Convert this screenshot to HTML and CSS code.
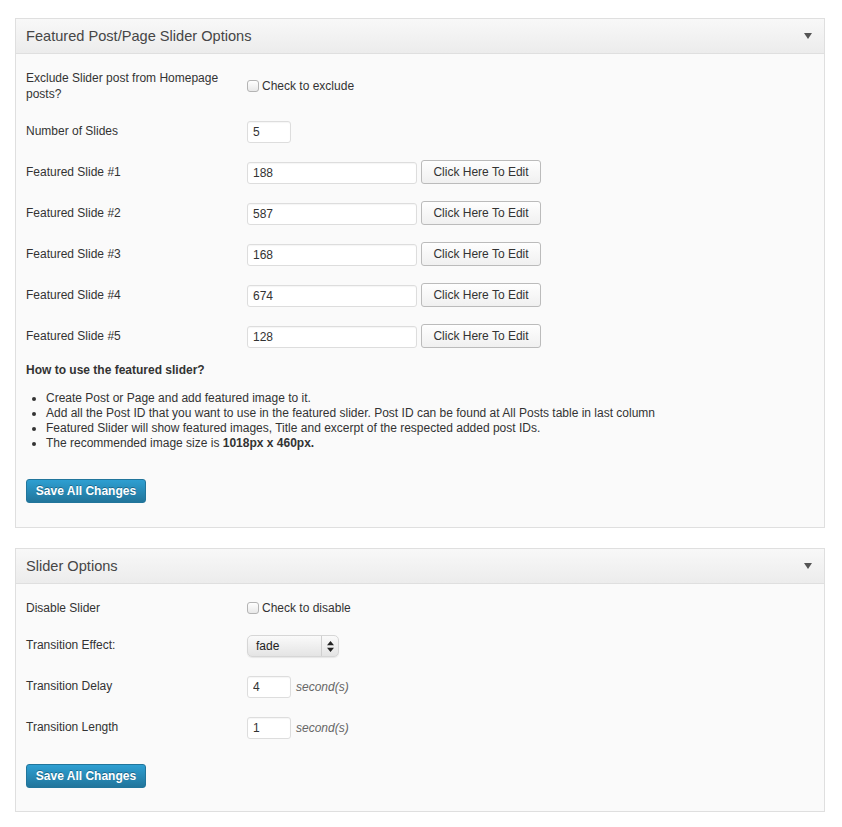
FILE: index.html
```html
<!DOCTYPE html>
<html>
<head>
<meta charset="utf-8">
<title>Slider Options</title>
<link rel="stylesheet" href="styles.css">
</head>
<body>
<div class="page">
  <section class="panel">
    <header class="panel-head">
      <h2 class="panel-title">Featured Post/Page Slider Options</h2>
      <svg class="toggle" width="8" height="6" viewBox="0 0 8 6"><path d="M0 0H8L4 6Z" fill="#555"/></svg>
    </header>
    <div class="panel-body">
      <div class="row row-center">
        <div class="label">Exclude Slider post from Homepage posts?</div>
        <label class="check"><input type="checkbox" class="cb"><span>Check to exclude</span></label>
      </div>
      <div class="row">
        <div class="label">Number of Slides</div>
        <div class="ctrl"><input type="text" class="inp small" value="5"></div>
      </div>
      <div class="row">
        <div class="label">Featured Slide #1</div>
        <div class="ctrl"><input type="text" class="inp wide" value="188"><button class="btn">Click Here To Edit</button></div>
      </div>
      <div class="row">
        <div class="label">Featured Slide #2</div>
        <div class="ctrl"><input type="text" class="inp wide" value="587"><button class="btn">Click Here To Edit</button></div>
      </div>
      <div class="row">
        <div class="label">Featured Slide #3</div>
        <div class="ctrl"><input type="text" class="inp wide" value="168"><button class="btn">Click Here To Edit</button></div>
      </div>
      <div class="row">
        <div class="label">Featured Slide #4</div>
        <div class="ctrl"><input type="text" class="inp wide" value="674"><button class="btn">Click Here To Edit</button></div>
      </div>
      <div class="row last">
        <div class="label">Featured Slide #5</div>
        <div class="ctrl"><input type="text" class="inp wide" value="128"><button class="btn">Click Here To Edit</button></div>
      </div>
      <h3 class="howto">How to use the featured slider?</h3>
      <ul class="steps">
        <li>Create Post or Page and add featured image to it.</li>
        <li>Add all the Post ID that you want to use in the featured slider. Post ID can be found at All Posts table in last column</li>
        <li>Featured Slider will show featured images, Title and excerpt of the respected added post IDs.</li>
        <li>The recommended image size is <strong>1018px x 460px.</strong></li>
      </ul>
      <button class="save save-1">Save All Changes</button>
    </div>
  </section>

  <section class="panel">
    <header class="panel-head">
      <h2 class="panel-title">Slider Options</h2>
      <svg class="toggle" width="8" height="6" viewBox="0 0 8 6"><path d="M0 0H8L4 6Z" fill="#555"/></svg>
    </header>
    <div class="panel-body body-2">
      <div class="row row-center first-2">
        <div class="label">Disable Slider</div>
        <label class="check"><input type="checkbox" class="cb"><span>Check to disable</span></label>
      </div>
      <div class="row">
        <div class="label">Transition Effect:</div>
        <div class="ctrl">
          <div class="select">
            <span class="select-val">fade</span>
            <span class="select-arrows"><svg width="7" height="11" viewBox="0 0 7 11"><path d="M3.5 0L7 4.2H0Z M3.5 11L7 6.8H0Z" fill="#222"/></svg></span>
          </div>
        </div>
      </div>
      <div class="row">
        <div class="label">Transition Delay</div>
        <div class="ctrl"><input type="text" class="inp small" value="4"><em class="unit">second(s)</em></div>
      </div>
      <div class="row">
        <div class="label">Transition Length</div>
        <div class="ctrl"><input type="text" class="inp small" value="1"><em class="unit">second(s)</em></div>
      </div>
      <button class="save save-2">Save All Changes</button>
    </div>
  </section>
</div>
</body>
</html>
```

FILE: styles.css
```css
html, body {
  margin: 0;
  padding: 0;
  background: #ffffff;
}
body {
  font-family: "Liberation Sans", Arial, Helvetica, sans-serif;
  font-size: 12px;
  color: #333333;
}
.page {
  padding: 18px 17px 0 15px;
  display: flex;
  flex-direction: column;
  gap: 20px;
}
.panel {
  border: 1px solid #dfdfdf;
  background: #fafafa;
}
.panel-head {
  height: 35px;
  box-sizing: border-box;
  display: flex;
  align-items: center;
  justify-content: space-between;
  padding: 0 12px 0 10px;
  background: linear-gradient(to bottom, #f8f8f8, #ececec);
  border-bottom: 1px solid #dfdfdf;
}
.panel-title {
  margin: 0;
  font-size: 14.6px;
  font-weight: normal;
  color: #464646;
  line-height: 20px;
}
.toggle {
  display: block;
}
.panel-body {
  padding: 15px 10px 24px 10px;
}
.body-2 {
  padding-top: 15px;
  padding-bottom: 23px;
}
.row {
  display: flex;
  align-items: flex-start;
  margin-bottom: 19px;
}
.row.last {
  margin-bottom: 14px;
}
.row-center {
  align-items: center;
}
.label {
  width: 200px;
  flex: none;
  margin-right: 21px;
  padding-top: 2px;
  line-height: 16px;
}
.row-center .label {
  padding-top: 1px;
}
.ctrl {
  display: flex;
  align-items: center;
  height: 22px;
}
.check {
  display: flex;
  align-items: center;
  line-height: 16px;
}
.cb {
  appearance: none;
  -webkit-appearance: none;
  width: 12px;
  height: 12px;
  margin: 0 3px 0 0;
  border: 1px solid #b4b4b4;
  border-radius: 3px;
  background: linear-gradient(to bottom, #ffffff, #e8e8e8);
  box-sizing: border-box;
}
.inp {
  height: 22px;
  box-sizing: border-box;
  border: 1px solid #dddddd;
  border-radius: 3px;
  background: #ffffff;
  box-shadow: inset 0 1px 1px rgba(0,0,0,0.04);
  font-family: "Liberation Sans", Arial, sans-serif;
  font-size: 12px;
  color: #333333;
  padding: 0 5px;
  margin: 0;
}
.small {
  width: 44px;
}
.wide {
  width: 170px;
}
.btn {
  margin: -2px 0 0 4px;
  width: 120px;
  height: 24px;
  box-sizing: border-box;
  border: 1px solid #bbbbbb;
  border-radius: 3px;
  background: linear-gradient(to bottom, #fefefe, #f0f0f0);
  font-family: "Liberation Sans", Arial, sans-serif;
  font-size: 12px;
  color: #333333;
  padding: 0;
}
.howto {
  margin: 0 0 13px 0;
  font-size: 12px;
  font-weight: bold;
  line-height: 16px;
}
.steps {
  margin: 0;
  padding-left: 20px;
  line-height: 15px;
}
.save {
  display: block;
  width: 120px;
  height: 24px;
  box-sizing: border-box;
  border: 1px solid #21759b;
  border-radius: 3px;
  background: linear-gradient(to bottom, #2e9fd2, #21759b);
  color: #ffffff;
  font-family: "Liberation Sans", Arial, sans-serif;
  font-size: 12px;
  font-weight: bold;
  text-shadow: 0 -1px 0 rgba(0,0,0,0.3);
  padding: 0;
}
.save-1 {
  margin-top: 28px;
}
.save-2 {
  margin-top: 25px;
}
.select {
  width: 92px;
  height: 22px;
  box-sizing: border-box;
  border: 1px solid #d6d6d6;
  border-radius: 5px;
  background: linear-gradient(to bottom, #fafafa, #e4e4e4);
  box-shadow: 0 1px 1px rgba(0,0,0,0.08);
  display: flex;
  align-items: center;
}
.select-val {
  flex: 1;
  padding-left: 8px;
  color: #222222;
}
.select-arrows {
  width: 16px;
  height: 20px;
  border-left: 1px solid #cfcfcf;
  display: flex;
  align-items: center;
  justify-content: center;
}
.unit {
  margin-left: 5px;
  color: #666666;
  font-style: italic;
}
```
